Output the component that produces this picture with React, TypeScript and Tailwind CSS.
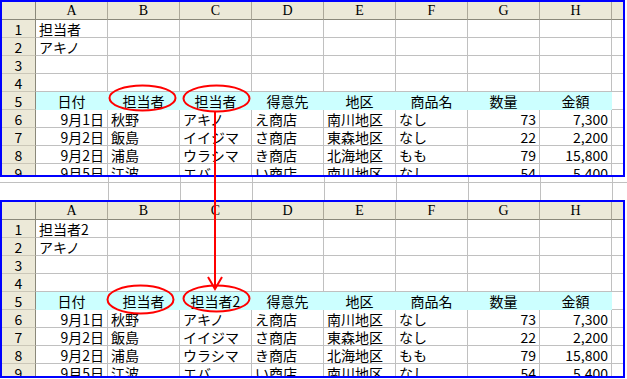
import React from 'react';

const COLS = ['A', 'B', 'C', 'D', 'E', 'F', 'G', 'H'];

type Align = 'l' | 'c' | 'r';
type Cell = { t: string; a?: Align };

const jp = { fontFamily: '"Noto Sans CJK JP", "Noto Sans", sans-serif' };

function bodyRows(title: string, c5: string): Cell[][] {
  return [
    [{ t: title }],
    [{ t: 'アキノ' }],
    [],
    [],
    ['日付', '担当者', c5, '得意先', '地区', '商品名', '数量', '金額'].map((t) => ({ t, a: 'c' as Align })),
    [
      { t: '9月1日', a: 'r' }, { t: '秋野' }, { t: 'アキノ' }, { t: 'え商店' },
      { t: '南川地区' }, { t: 'なし' }, { t: '73', a: 'r' }, { t: '7,300', a: 'r' },
    ],
    [
      { t: '9月2日', a: 'r' }, { t: '飯島' }, { t: 'イイジマ' }, { t: 'さ商店' },
      { t: '東森地区' }, { t: 'なし' }, { t: '22', a: 'r' }, { t: '2,200', a: 'r' },
    ],
    [
      { t: '9月2日', a: 'r' }, { t: '浦島' }, { t: 'ウラシマ' }, { t: 'き商店' },
      { t: '北海地区' }, { t: 'もも' }, { t: '79', a: 'r' }, { t: '15,800', a: 'r' },
    ],
    [
      { t: '9月5日', a: 'r' }, { t: '江波' }, { t: 'エバ' }, { t: 'い商店' },
      { t: '南川地区' }, { t: 'なし' }, { t: '54', a: 'r' }, { t: '5,400', a: 'r' },
    ],
  ];
}

function Sheet({ title, c5, height }: { title: string; c5: string; height: string }) {
  const rows = bodyRows(title, c5);
  return (
    <div className={`w-[625px] ${height} border-2 border-[#0000ff] overflow-hidden bg-white`}>
      {/* column headers */}
      <div className="flex h-[18px]">
        <div className="w-[34px] shrink-0 bg-[#ece9d8] border-r border-b border-[#8a887a]" />
        {COLS.map((c) => (
          <div
            key={c}
            className="w-[72px] shrink-0 bg-[#ece9d8] border-r border-b border-r-[#aca899] border-b-[#8a887a] flex items-center justify-center text-[14px] leading-[16px] text-black"
            style={{ fontFamily: '"Liberation Serif", serif' }}
          >
            {c}
          </div>
        ))}
        <div className="flex-1 bg-[#ece9d8] border-b border-[#8a887a]" />
      </div>
      {rows.map((row, i) => {
        const hl = i === 4;
        return (
          <div key={i} className="flex h-[18px]">
            <div
              className="w-[34px] shrink-0 bg-[#ece9d8] border-r border-b border-r-[#8a887a] border-b-[#cbc7b8] flex items-center justify-center overflow-hidden text-[14px] leading-[16px] text-black"
              style={jp}
            >
              {i + 1}
            </div>
            {COLS.map((c, j) => {
              const cell = row[j];
              const a = cell?.a ?? 'l';
              return (
                <div
                  key={c}
                  className={`w-[72px] shrink-0 border-r border-b flex items-end overflow-hidden whitespace-nowrap text-[14px] leading-[16px] text-black px-[3px] ${
                    hl ? 'bg-[#ccffff] border-[#ccffff]' : 'border-[#c0c0c0]'
                  } ${a === 'r' ? 'justify-end' : a === 'c' ? 'justify-center' : 'justify-start'}`}
                  style={jp}
                >
                  {cell?.t}
                </div>
              );
            })}
            <div className="flex-1 border-b border-[#c0c0c0]" />
          </div>
        );
      })}
    </div>
  );
}

function Gap() {
  return (
    <div className="w-[627px] h-[23px] bg-white flex flex-col">
      <div className="flex h-[6px]">
        <div className="w-[109px] shrink-0 border-r border-b border-[#c0c0c0]" />
        {COLS.map((c) => (
          <div key={c} className="w-[72px] shrink-0 border-r border-b border-[#c0c0c0]" />
        ))}
        <div className="flex-1 border-b border-[#c0c0c0]" />
      </div>
      <div className="flex flex-1">
        <div className="w-[109px] shrink-0 border-r border-[#c0c0c0]" />
        {COLS.map((c) => (
          <div key={c} className="w-[72px] shrink-0 border-r border-[#c0c0c0]" />
        ))}
      </div>
    </div>
  );
}

export default function App() {
  return (
    <div className="relative w-[627px] h-[379px] bg-white overflow-hidden">
      <Sheet title="担当者" c5="担当者" height="h-[177px]" />
      <Gap />
      <Sheet title="担当者2" c5="担当者2" height="h-[178px]" />

      {/* red marks */}
      <svg className="absolute inset-0 pointer-events-none" width="627" height="379" viewBox="0 0 627 379">
        <g fill="none" stroke="#ff0000" strokeWidth="2">
          <ellipse cx="142.5" cy="98" rx="33" ry="12.5" />
          <ellipse cx="216.5" cy="98.5" rx="33" ry="13" />
          <ellipse cx="140.5" cy="299.5" rx="33" ry="14" />
          <ellipse cx="216.5" cy="298.5" rx="33" ry="13" />
          <line x1="215" y1="111" x2="215" y2="288" />
          <polyline points="208,277 215,289 222,277" />
        </g>
      </svg>
    </div>
  );
}
